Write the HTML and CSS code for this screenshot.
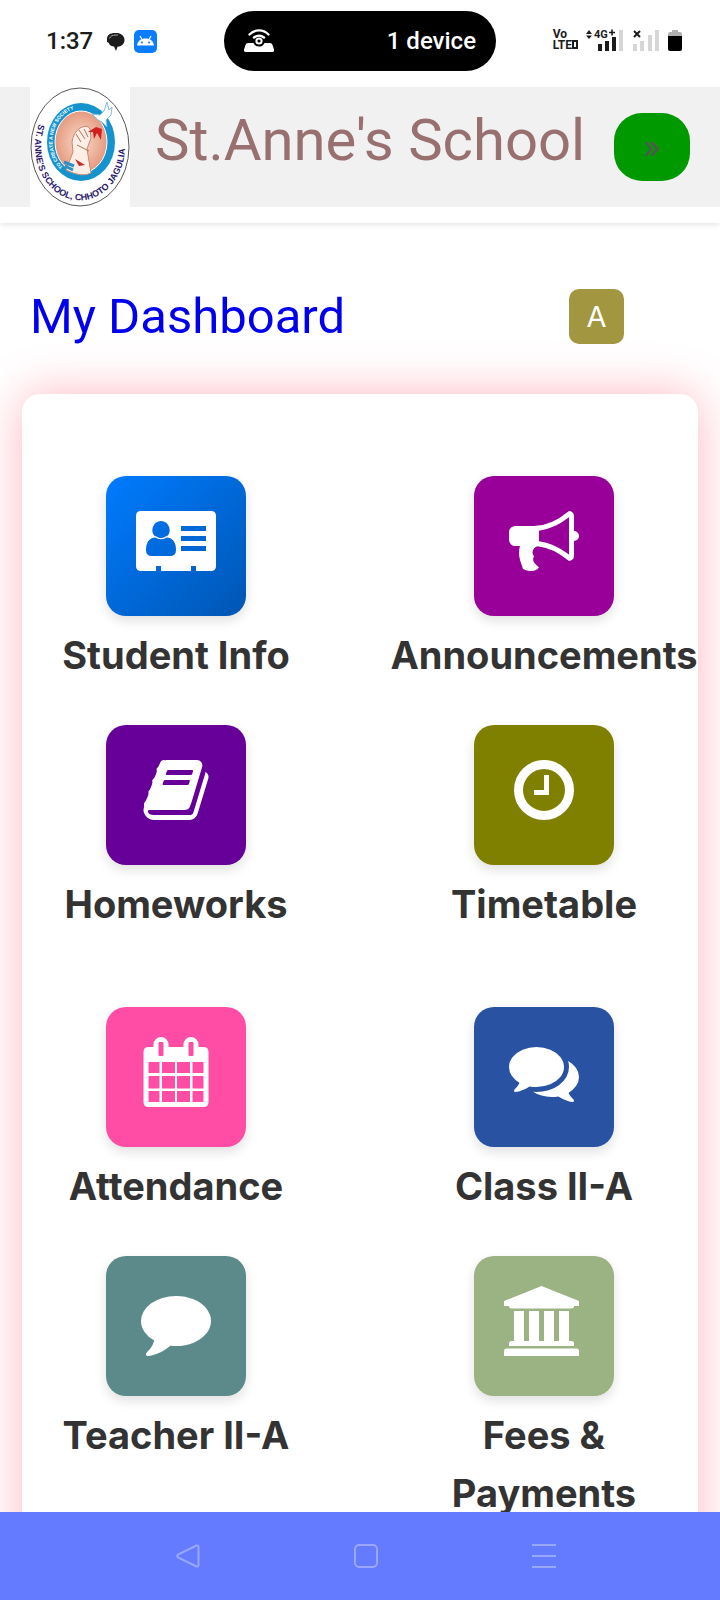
FILE: index.html
```html
<!DOCTYPE html>
<html lang="en">
<head>
    <meta charset="UTF-8">
    <meta name="viewport" content="width=device-width, initial-scale=1.0">
    <title>St.Anne's School</title>
    <link rel="stylesheet" href="styles.css">
</head>
<body>
    <div class="statusbar">
        <div class="status-left">
            <span class="clock">1:37</span>
            <svg width="19" height="19" viewBox="0 0 19 19">
                <path d="M1 7C1 3 4 1 9 1h3c4 1 6.500 3.500 6.500 7 0 4-3 6.500-7 6.800L10 19l-2-4.500C4 14 3 12 3 11L1 10z" fill="#1c1c1c"/>
                <path d="M3.500 6.500C4.500 4 6 3.200 10 3h2" fill="none" stroke="#aaa" stroke-width="1"/>
            </svg>
            <svg width="23" height="23" viewBox="0 0 23 23">
                <rect width="23" height="23" rx="5" fill="#0a7cff"/>
                <path d="M3 15.500c.5-4.500 4-7 8.500-7s8 2.500 8.500 7z" fill="#fff"/>
                <path d="M6 6l2 3.500M17 6l-2 3.500" stroke="#fff" stroke-width="1.200"/>
                <circle cx="8" cy="12.500" r="1" fill="#0a7cff"/>
                <circle cx="15" cy="12.500" r="1" fill="#0a7cff"/>
            </svg>
        </div>
        <div class="pill">
            <svg width="30" height="24" viewBox="0 0 30 24">
                <path d="M5.500 5.500C11 0 19 0 24.500 5.500M10 8.500c3-2.500 7-2.500 10 0" fill="none" stroke="#fff" stroke-width="2.400" stroke-linecap="round"/>
                <path d="M4 14h5.500a6 6 0 0 0 11 0H26q2 0 2.500 2l1.500 4.500q.5 2.500-2 2.500H2q-2.500 0-2-2.500L1.500 16Q2 14 4 14z" fill="#fff"/>
                <circle cx="15" cy="12" r="2.600" fill="none" stroke="#fff" stroke-width="2"/>
            </svg>
            <span>1 device</span>
        </div>
        <div class="status-right">
            <div class="volte"><span>Vo</span><span>LTE<i></i></span></div>
            <svg width="39" height="24" viewBox="0 0 39 24">
                <path d="M0 5l3-4 3 4zM0 6.500h6L3 10z" fill="#1c1c1c"/>
                <text x="8" y="9" class="net">4G</text>
                <path d="M23 3.500h6M26 .5v6" stroke="#1c1c1c" stroke-width="1.600"/>
                <path d="M12 15h4v7h-4zM19 12h4v10h-4zM26 8h4v14h-4z" fill="#1c1c1c"/>
                <rect x="33" y="1" width="4" height="21" fill="#d6d6d6"/>
            </svg>
            <svg width="27" height="24" viewBox="0 0 27 24">
                <path d="M1 2l6 6M7 2L1 8" stroke="#1c1c1c" stroke-width="2"/>
                <path d="M0 15h4v7H0zM7 12h4v10H7zM15 6h4v16h-4zM22 1h4v21h-4z" fill="#d6d6d6"/>
            </svg>
            <svg width="14" height="24" viewBox="0 0 14 24">
                <path d="M0 8V5q0-2 2-2h2V1h6v2h2q2 0 2 2v3z" fill="#b0b0b0"/>
                <path d="M0 7h14v13q0 2-2 2H2q-2 0-2-2z" fill="#000"/>
            </svg>
        </div>
    </div>

    <main>
        <header class="topbar">
            <svg class="logo" width="100" height="120" viewBox="0 0 100 120">
                <defs>
                    <path id="ring-out" d="M9 37 A45 54 0 1 0 91 37"/>
                    <path id="ring-in" d="M33 80 A28 33 0 0 1 65 26"/>
                    <radialGradient id="skin">
                        <stop offset="0" stop-color="#fbdccb"/>
                        <stop offset="1" stop-color="#e59a80"/>
                    </radialGradient>
                </defs>
                <rect width="100" height="120" fill="#fff"/>
                <ellipse cx="50" cy="60" rx="49" ry="59" fill="#fff" stroke="#555" stroke-width="1"/>
                <ellipse cx="51" cy="55" rx="34" ry="39" fill="#1593cf"/>
                <ellipse cx="51" cy="55" rx="26" ry="31" fill="url(#skin)" stroke="#fff" stroke-width="1"/>
                <path d="M36 83l7-18-1-10q1-9 8-14 8-4 10 1l1 9-4 11 4 24q-9 5-25-3z" fill="#fdeee6" stroke="#c98973" stroke-width="1"/>
                <path d="M46 47l5 8M49 43l6 9M54 42l4 8M47 58l12 6" stroke="#b5705c" stroke-width="1"/>
                <path d="M34 75l10 4M35 79l8 4" stroke="#2e8fc6" stroke-width="3"/>
                <path d="M45 72l10 6-6 1z" fill="#c22a25"/>
                <path d="M58 45l8-5 6 2-1 11-4-7-3 6-1-7z" fill="#d0201f"/>
                <path d="M62 27l8 1 4-4 3-9 2 8 3-3-1 8-5 5 1 7-5-5-4-2z" fill="#fff" stroke="#7cc1e4" stroke-width="1"/>
                <text class="ring-out"><textPath href="#ring-out">ST. ANNE'S SCHOOL, CHHOTO JAGULIA</textPath></text>
                <text class="ring-in"><textPath href="#ring-in">TO CREATE A NEW SOCIETY</textPath></text>
            </svg>
            <h1>St.Anne's School</h1>
            <button class="menu-btn" type="button">»</button>
        </header>

        <div class="page-head">
            <h2>My Dashboard</h2>
            <span class="avatar">A</span>
        </div>

        <div class="card">
            <div class="tiles">
                <a class="tile" href="#">
                    <span class="icon info">
                        <svg width="80" height="70" viewBox="0 0 80 70">
                            <path fill-rule="evenodd" d="M5 5h70q5 0 5 5v50q0 5-5 5H60v-5h-5v5H25v-5h-5v5H5q-5 0-5-5V10q0-5 5-5zM25 15a9 9 0 0 0-5 16.200Q10 32 10 44q0 6 6 6h18q6 0 6-6 0-12-10-12.800A9 9 0 0 0 25 15zM45 20v5h25v-5zM45 30v5h25v-5zM45 40v5h25v-5z"/>
                            <path d="M19 30.500q6 4.500 12 0" fill="none" stroke="#fff" stroke-width="1.200"/>
                        </svg>
                    </span>
                    <span class="label">Student Info</span>
                </a>
                <a class="tile" href="#">
                    <span class="icon announce">
                        <svg width="70" height="70" viewBox="0 0 1792 1792"><path d="M1664 640q53 0 90.500 37.500t37.500 90.500-37.500 90.500-90.500 37.500v384q0 52-38 90t-90 38q-417-347-812-380-58 19-91 66t-31 100.500 40 92.500q-20 33-23 65.500t6 58 33.500 55 48 50 61.500 50.500q-29 58-111.500 83t-168.500 11.500-132-55.500q-7-23-29.500-87.500t-32-94.500-23-89-15-101 3.500-98.500 22-110.500h-122q-66 0-113-47t-47-113v-192q0-66 47-113t113-47h480q435 0 896-384 52 0 90 38t38 90v384zm-128 604v-954q-394 302-768 343v270q377 42 768 341z"/></svg>
                    </span>
                    <span class="label">Announcements</span>
                </a>
                <a class="tile" href="#">
                    <span class="icon homework">
                        <svg width="70" height="70" viewBox="0 0 1792 1792"><path d="M1703 478q40 57 18 129l-275 906q-19 64-76.500 107.500t-122.500 43.500h-923q-77 0-148.500-53.500t-99.500-131.500q-24-67-2-127 0-4 3-27t4-37q1-8-3-21.500t-3-19.500q2-11 8-21t16.500-23.500 16.500-23.500q23-38 45-91.500t30-91.500q3-10 .5-30t-.5-28q3-11 17-28t17-23q21-36 42-92t25-90q1-9-2.500-32t.5-28q4-13 22-30.500t22-22.500q19-26 42.500-84.500t27.500-96.500q1-8-3-25.500t-2-26.500q2-8 9-18t18-23 17-21q8-12 16.500-30.500t15-35 16-36 19.500-32 26.500-23.500 36-11.500 47.500 5.500l-1 3q38-9 51-9h761q74 0 114 56t18 130l-274 906q-36 119-71.500 153.500t-128.500 34.500h-869q-27 0-38 15-11 16-1 43 24 70 144 70h923q29 0 56-15.500t35-41.500l300-987q7-22 5-57 38 15 59 43zm-1064 2q-4 13 2 22.500t20 9.500h608q13 0 25.500-9.500t16.500-22.500l21-64q4-13-2-22.500t-20-9.500h-608q-13 0-25.500 9.500t-16.500 22.500zm-83 256q-4 13 2 22.500t20 9.500h608q13 0 25.500-9.500t16.500-22.500l21-64q4-13-2-22.500t-20-9.500h-608q-13 0-25.500 9.500t-16.500 22.500z"/></svg>
                    </span>
                    <span class="label">Homeworks</span>
                </a>
                <a class="tile" href="#">
                    <span class="icon timetable">
                        <svg width="70" height="70" viewBox="0 0 70 70">
                            <circle cx="35" cy="35" r="25.500" fill="none" stroke="#fff" stroke-width="9"/>
                            <path d="M35 20h5v20H25v-5h10z"/>
                        </svg>
                    </span>
                    <span class="label">Timetable</span>
                </a>
            </div>

            <div class="tiles">
                <a class="tile" href="#">
                    <span class="icon attendance">
                        <svg width="70" height="70" viewBox="0 0 70 70">
                            <path fill-rule="evenodd" d="M7.500 10h5V7.500a7.500 7.500 0 0 1 15 0V10h15V7.500a7.500 7.500 0 0 1 15 0V10h5q5 0 5 5v50q0 5-5 5h-55q-5 0-5-5V15q0-5 5-5zM17.500 6v12q0 1 1 1h3q1 0 1-1V6q0-1-1-1h-3q-1 0-1 1zM47.500 6v12q0 1 1 1h3q1 0 1-1V6q0-1-1-1h-3q-1 0-1 1zM7.500 25v11h11V25zM21 25v11h13V25zM36 25v11h13V25zM51.500 25v11h11V25zM7.500 39v12.500h11V39zM21 39v12.500h13V39zM36 39v12.500h13V39zM51.500 39v12.500h11V39zM7.500 54v11h11V54zM21 54v11h13V54zM36 54v11h13V54zM51.500 54v11h11V54z"/>
                        </svg>
                    </span>
                    <span class="label">Attendance</span>
                </a>
                <a class="tile" href="#">
                    <span class="icon class-chat">
                        <svg width="70" height="70" viewBox="0 0 1792 1792"><path d="M1408 768q0 139-94 257t-256.500 186.500-353.500 68.500q-86 0-176-16-124 88-278 128-36 9-86 16h-3q-11 0-20.500-8t-11.500-21q-1-3-1-6.500t.5-6.500 2-6l2.500-5 3.500-5.500 4-5 4.500-5 4-4.500q5-6 23-25t26-29.500 22.500-29 25-38.500 20.500-44q-124-72-195-177t-71-224q0-139 94-257t256.500-186.500 353.500-68.500 353.500 68.500 256.500 186.500 94 257zm384 256q0 120-71 224.500t-195 176.500q10 24 20.500 44t25 38.500 22.500 29 26 29.500 23 25q1 1 4 4.500t4.500 5 4 5 3.500 5.500l2.500 5 2 6 .5 6.500-1 6.500q-3 14-13 22t-22 7q-50-7-86-16-154-40-278-128-90 16-176 16-271 0-472-132 58 4 88 4 161 0 309-45t264-129q125-92 192-212t67-254q0-77-23-152 129 71 204 178t75 230z"/></svg>
                    </span>
                    <span class="label">Class II-A</span>
                </a>
                <a class="tile" href="#">
                    <span class="icon teacher">
                        <svg width="70" height="70" viewBox="0 0 1792 1792"><path d="M1792 896q0 174-120 321.500t-326 233-450 85.500q-70 0-145-8-198 175-460 242-49 14-114 22-17 2-30.500-9t-17.500-29v-1q-3-4-.5-12t2-10 4.500-9.500l6-9 7-8.500 8-9q7-8 31-34.500t34.500-38 31-39.500 32.500-51 27-59 26-76q-157-89-247.500-220t-90.500-281q0-130 71-248.500t191-204.500 286-136.500 348-50.500q244 0 450 85.500t326 233 120 321.500z"/></svg>
                    </span>
                    <span class="label">Teacher II-A</span>
                </a>
                <a class="tile" href="#">
                    <span class="icon fees">
                        <svg width="80" height="70" viewBox="0 0 80 70"><path d="M37.500 0L75 15v5h-5q0 2.500-2.500 2.500h-60Q5 22.500 5 20H0v-5zM10 25h10v30h5V25h10v30h5V25h10v30h5V25h10v30h2.500q2.500 0 2.500 2.500V60H5v-2.500Q5 55 7.500 55H10zM2.500 62.500h70q2.500 0 2.500 2.500v5H0v-5q0-2.500 2.500-2.500z"/></svg>
                    </span>
                    <span class="label">Fees &amp; Payments</span>
                </a>
            </div>
        </div>
    </main>

    <nav class="navbar">
        <button type="button" aria-label="Back">
            <svg width="24" height="24" viewBox="0 0 24 24"><path d="M20.500 1.500L2 10.500q-1.500 1.500 0 3l18.500 9q2 .5 2-1.500V3q0-2-2-1.500z"/></svg>
        </button>
        <button type="button" aria-label="Home">
            <svg width="24" height="24" viewBox="0 0 24 24"><rect x="1" y="1" width="22" height="22" rx="4"/></svg>
        </button>
        <button type="button" aria-label="Recent apps">
            <svg width="24" height="24" viewBox="0 0 24 24"><path d="M0 1h24M0 12h24M0 23h24"/></svg>
        </button>
    </nav>
</body>
</html>
```

FILE: styles.css
```css
* {
    box-sizing: border-box;
}

body {
    margin: 0;
    height: 100vh;
    display: flex;
    flex-direction: column;
    font-family: Inter, "Liberation Sans", sans-serif;
    background-color: #fff;
}

svg {
    display: block;
    flex-shrink: 0;
}

/* phone status bar */
.statusbar {
    display: grid;
    grid-template-columns: 1fr 272px 1fr;
    align-items: center;
    height: 87px;
    padding-bottom: 5px;
    flex-shrink: 0;
    font-family: Roboto, sans-serif;
    font-size: 24px;
    font-weight: 500;
    color: #1c1c1c;
}

.status-left {
    display: flex;
    align-items: center;
    gap: 9px;
    padding-left: 46px;
}

.clock {
    margin-right: 4px;
}

.pill {
    display: flex;
    align-items: center;
    justify-content: space-between;
    height: 60px;
    padding: 0 20px;
    border-radius: 30px;
    background-color: #000;
    color: #fff;
}

.status-right {
    display: flex;
    justify-content: flex-end;
    gap: 8px;
    padding-right: 38px;
}

.volte {
    display: flex;
    flex-direction: column;
    font-size: 12px;
    line-height: 11px;
    font-weight: 700;
}

.volte i {
    display: inline-block;
    width: 6px;
    height: 9px;
    border: 2px solid #1c1c1c;
}

.net {
    font-size: 11px;
    font-weight: 700;
    fill: #1c1c1c;
}

main {
    flex: 1;
    min-height: 0;
    overflow-y: auto;
    overflow-x: hidden;
    scrollbar-width: none;
}

/* school header */
.topbar {
    display: flex;
    align-items: center;
    padding: 0 30px;
    background-color: #f1f1f1;
    box-shadow: 0 16px 0 #fff, 0 18px 5px rgba(0, 0, 0, 0.1);
}

.topbar h1 {
    flex: 1;
    margin: 0;
    padding: 0 0 14px 25px;
    font-family: Roboto, sans-serif;
    font-size: 58px;
    font-weight: 400;
    line-height: 64px;
    white-space: nowrap;
    color: #997070;
}

.ring-out {
    font-family: "Liberation Sans Narrow", "Liberation Sans", sans-serif;
    font-size: 9px;
    font-weight: 700;
    fill: #2a1a6e;
}

.ring-in {
    font-family: "Liberation Sans Narrow", "Liberation Sans", sans-serif;
    font-size: 5px;
    font-weight: 700;
    fill: #fff;
}

.menu-btn {
    flex-shrink: 0;
    width: 76px;
    height: 68px;
    padding: 0;
    border: none;
    border-radius: 28px;
    background-color: #009900;
    color: #555;
    font-family: inherit;
    font-size: 30px;
}

.page-head {
    display: flex;
    align-items: center;
    justify-content: space-between;
    margin: 82px 96px 50px 30px;
}

.page-head h2 {
    margin: 0;
    font-family: Roboto, sans-serif;
    font-size: 49px;
    font-weight: 400;
    line-height: 55px;
    color: #0000ee;
}

.avatar {
    width: 55px;
    border-radius: 10px;
    background-color: #a39640;
    color: #fff;
    font-size: 29px;
    line-height: 55px;
    text-align: center;
}

/* dashboard card */
.card {
    margin: 0 22px;
    padding: 82px 0;
    border-radius: 18px;
    background-color: #fff;
    box-shadow: 0 0 50px #ffb6c1;
}

.tiles {
    display: grid;
    grid-template-columns: 1fr 1fr;
    gap: 41px 60px;
    margin-bottom: 74px;
}

.tile {
    display: flex;
    flex-direction: column;
    align-items: center;
    gap: 10px;
    min-width: 0;
    text-decoration: none;
    color: #333;
}

.icon {
    display: flex;
    justify-content: center;
    align-items: center;
    width: 140px;
    height: 140px;
    padding-bottom: 10px;
    border-radius: 20px;
    box-shadow: 0 5px 12px rgba(0, 0, 0, 0.12);
    fill: #fff;
}

.label {
    font-size: 38px;
    font-weight: 700;
    line-height: 58px;
    text-align: center;
}

.info {
    background: linear-gradient(135deg, #007bff, #0056b3);
}

.announce {
    background-color: #990099;
}

.homework {
    background-color: #660099;
}

.timetable {
    background-color: #808000;
}

.attendance {
    background-color: #ff4da6;
}

.class-chat {
    background-color: #2952a3;
}

.teacher {
    background-color: #5c8a8a;
}

.fees {
    background-color: #9bb283;
}

/* phone navigation bar */
.navbar {
    display: flex;
    justify-content: center;
    align-items: center;
    gap: 154px;
    height: 88px;
    padding-left: 12px;
    flex-shrink: 0;
    background-color: #657bff;
}

.navbar button {
    padding: 0;
    border: none;
    background: none;
    fill: none;
    stroke: #98a7ff;
    stroke-width: 2;
}
```
